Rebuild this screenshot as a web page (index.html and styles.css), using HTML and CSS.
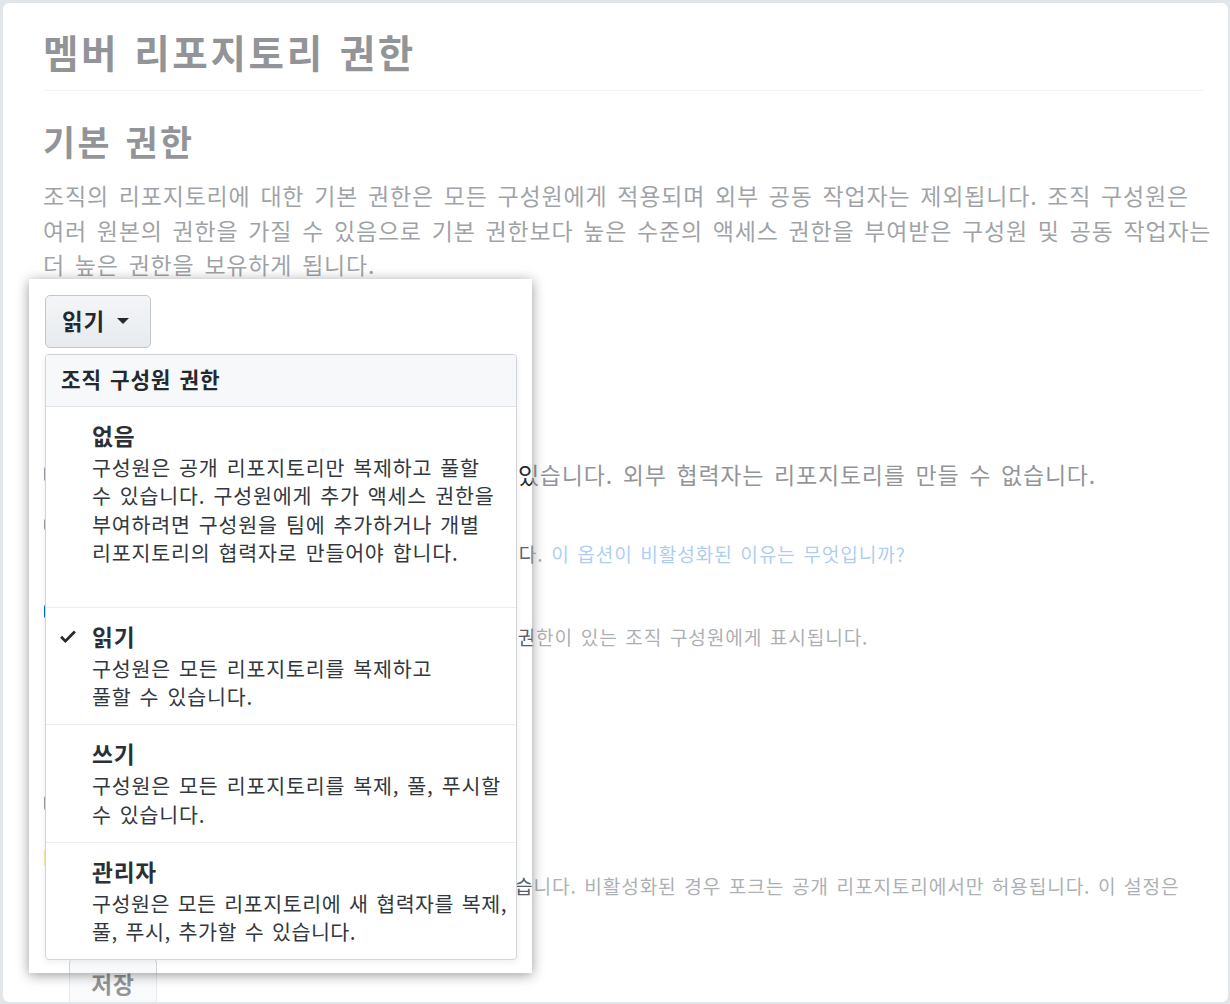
FILE: index.html
```html
<!DOCTYPE html>
<html lang="ko">
<head>
<meta charset="utf-8">
<title>멤버 리포지토리 권한</title>
<link rel="stylesheet" href="styles.css">
</head>
<body>
<div class="frame">
  <div class="head">
    <h1 class="title">멤버 리포지토리 권한</h1>
  </div>

  <section class="section">
    <h2 class="subtitle">기본 권한</h2>
    <p class="lead">조직의 리포지토리에 대한 기본 권한은 모든 구성원에게 적용되며 외부 공동 작업자는 제외됩니다. 조직 구성원은 여러 원본의 권한을 가질 수 있음으로 기본 권한보다 높은 수준의 액세스 권한을 부여받은 구성원 및 공동 작업자는 더 높은 권한을 보유하게 됩니다.</p>

    <div class="select">
      <button class="select-btn" type="button">읽기<span class="caret"></span></button>
      <div class="menu">
        <div class="menu-header">조직 구성원 권한</div>
        <div class="menu-item first">
          <div class="item-title">없음</div>
          <div class="item-desc">구성원은 공개 리포지토리만 복제하고 풀할<br>수 있습니다. 구성원에게 추가 액세스 권한을<br>부여하려면 구성원을 팀에 추가하거나 개별<br>리포지토리의 협력자로 만들어야 합니다.</div>
        </div>
        <div class="menu-item">
          <svg class="check" width="16" height="21" viewBox="0 0 12 16" aria-hidden="true"><path d="M12 5l-8 8-4-4 1.5-1.5L4 10l6.5-6.5L12 5z" fill="#24292e"/></svg>
          <div class="item-title">읽기</div>
          <div class="item-desc">구성원은 모든 리포지토리를 복제하고<br>풀할 수 있습니다.</div>
        </div>
        <div class="menu-item">
          <div class="item-title">쓰기</div>
          <div class="item-desc">구성원은 모든 리포지토리를 복제, 풀, 푸시할<br>수 있습니다.</div>
        </div>
        <div class="menu-item">
          <div class="item-title">관리자</div>
          <div class="item-desc tight">구성원은 모든 리포지토리에 새 협력자를 복제,<br>풀, 푸시, 추가할 수 있습니다.</div>
        </div>
      </div>
    </div>
  </section>

  <section class="section">
    <h2 class="subtitle sec-gap">리포지토리 생성</h2>
    <div class="row row-a"><span class="box"></span><span class="row-text">멤버는 공개와 비공개 리포지토리를 만들 수 있습니다. 외부 협력자는 리포지토리를 만들 수 없습니다.</span></div>
    <div class="row row-b"><span class="box small"></span><span class="label">공개</span></div>
    <p class="note note-b">공개 리포지토리 생성은 조직 소유자가 비활성화했습니다. <a class="link" href="#">이 옵션이 비활성화된 이유는 무엇입니까?</a></p>
    <div class="row row-c"><span class="box checked"></span><span class="label">비공개</span></div>
    <p class="note note-c">비공개 리포지토리는 해당 리포지토리에 대한 읽기 권한이 있는 조직 구성원에게 표시됩니다.</p>
  </section>

  <section class="section">
    <h2 class="subtitle sec-gap2">리포지토리 포크</h2>
    <div class="row row-d"><span class="box"></span><span class="label">포크 허용</span></div>
    <p class="fork-title">비공개 리포지토리 포크 허용</p>
    <p class="note note-d">활성화된 경우 비공개 리포지토리에서도 포크할 수 있습니다. 비활성화된 경우 포크는 공개 리포지토리에서만 허용됩니다. 이 설정은 리포지토리별로 구성할 수도 있습니다.</p>
  </section>

  <button class="save-btn" type="button">저장</button>
</div>

<div class="spotlight"></div>
</body>
</html>
```

FILE: styles.css
```css
html {
  background: #c6ccd3;
}

body {
  margin: 0;
  padding: 3px 2px 2px 3px;
  height: 999px;
  overflow: hidden;
  font-family: "Noto Sans CJK KR", "Noto Sans", sans-serif;
  color: #24292e;
  letter-spacing: 0.05em;
  word-spacing: 0.095em;
  word-break: keep-all;
}

.frame {
  background: #ffffff;
  border-radius: 6px;
  height: 999px;
  box-sizing: border-box;
  padding: 26px 10px 0 40px;
  overflow: hidden;
}

.head {
  margin-right: 14px;
  padding-bottom: 17px;
  border-bottom: 1px solid #e6e6e6;
}

.title {
  margin: 0;
  font-size: 38.6px;
  line-height: 44px;
  font-weight: 700;
  color: #24292e;
  letter-spacing: 0.068em;
}

.subtitle {
  margin: 30px 0 0;
  font-size: 34.8px;
  line-height: 40px;
  font-weight: 700;
  color: #24292e;
  letter-spacing: 0.07em;
}

.lead {
  margin: 17px 0 0;
  font-size: 23px;
  line-height: 34.5px;
  color: #3f464d;
  word-spacing: 0.115em;
}

/* select + dropdown */
.select {
  position: relative;
  margin-top: 13px;
}

.select-btn {
  display: flex;
  align-items: center;
  box-sizing: border-box;
  height: 53px;
  width: 106px;
  padding: 0 0 2px 16px;
  margin-left: 2px;
  border: 1px solid #c3c7cb;
  border-radius: 5px;
  background: linear-gradient(#f3f5f7, #e8ebee);
  font-family: inherit;
  font-size: 22.5px;
  font-weight: 700;
  color: #24292e;
  letter-spacing: inherit;
  word-spacing: inherit;
}

.caret {
  display: inline-block;
  margin-left: 12px;
  margin-top: 2px;
  border-top: 6px solid #24292e;
  border-left: 6px solid transparent;
  border-right: 6px solid transparent;
}

.menu {
  position: absolute;
  z-index: 20;
  left: 2px;
  top: calc(100% + 6px);
  width: 472px;
  box-sizing: border-box;
  background: #ffffff;
  border: 1px solid #d1d5da;
  border-radius: 4px;
  box-shadow: 0 2px 6px rgba(27, 31, 35, 0.08);
  overflow: hidden;
}

.menu-header {
  height: 47px;
  line-height: 47px;
  padding: 0 15px 4px;
  background: #f6f8fa;
  border-bottom: 1px solid #e1e4e8;
  font-size: 21.3px;
  font-weight: 700;
  color: #24292e;
}

.menu-item {
  position: relative;
  padding: 14px 4px 13.5px 46px;
  border-top: 1px solid #eaecef;
}

.menu-item.first {
  border-top: 0;
  padding-bottom: 40px;
}

.check {
  position: absolute;
  left: 14px;
  top: 18px;
}

.item-title {
  font-size: 22.7px;
  line-height: 30px;
  font-weight: 700;
  color: #2b3036;
}

.item-desc {
  margin-top: 2px;
  font-size: 20.6px;
  line-height: 28.5px;
  color: #32383e;
  white-space: nowrap;
}

.item-desc.tight {
  letter-spacing: 0.025em;
}

/* rows partly hidden under the menu */
.sec-gap {
  margin-top: 52px;
}

.sec-gap2 {
  margin-top: 50px;
}

.row {
  display: flex;
  align-items: center;
}

.box {
  flex: none;
  width: 16px;
  height: 16px;
  box-sizing: border-box;
  border: 1px solid #959da5;
  border-radius: 3px;
  background: #ffffff;
  margin-left: 1px;
}

.box.small {
  width: 13px;
  height: 13px;
}

.box.checked {
  width: 15px;
  height: 15px;
  border-color: #0366d6;
  background: #0366d6;
}

.row-a {
  margin-top: 17px;
  height: 34.5px;
  font-size: 23px;
  color: #24292e;
  word-spacing: 0.11em;
}

.row-text {
  margin-left: 4px;
  white-space: nowrap;
}

.label {
  margin-left: 8px;
  font-size: 19.2px;
  font-weight: 700;
}

.row-b {
  margin-top: 20px;
  height: 26px;
}

.row-c {
  margin-top: 31px;
  height: 24px;
}

.row-d {
  margin-top: 49px;
  height: 26px;
}

.note {
  margin: 0;
  font-size: 19.2px;
  line-height: 28px;
  color: #586069;
}

.note-b {
  margin-top: 3px;
  padding-left: 13px;
  white-space: nowrap;
}

.note-c {
  padding-left: 41px;
  white-space: nowrap;
}

.note-d {
  padding-left: 20px;
  margin-right: 20px;
}

.fork-title {
  margin: 28px 0 0;
  font-size: 23px;
  line-height: 28px;
  font-weight: 700;
}

.link {
  color: #5c9ce2;
  text-decoration: none;
}

.save-btn {
  display: block;
  margin: 30px 0 0 26px;
  width: 88px;
  height: 50px;
  border: 1px solid #d1d5da;
  border-radius: 5px;
  background: linear-gradient(#fafbfc, #eff3f6);
  font-family: inherit;
  font-size: 22.7px;
  font-weight: 700;
  color: #24292e;
  letter-spacing: inherit;
}

/* spotlight: transparent hole, page outside is washed out */
.spotlight {
  position: absolute;
  z-index: 10;
  left: 29px;
  top: 279px;
  width: 503px;
  height: 694px;
  pointer-events: none;
  box-shadow: 0 2px 12px rgba(0, 0, 0, 0.4), 0 0 0 3000px rgba(255, 255, 255, 0.5);
}
```
